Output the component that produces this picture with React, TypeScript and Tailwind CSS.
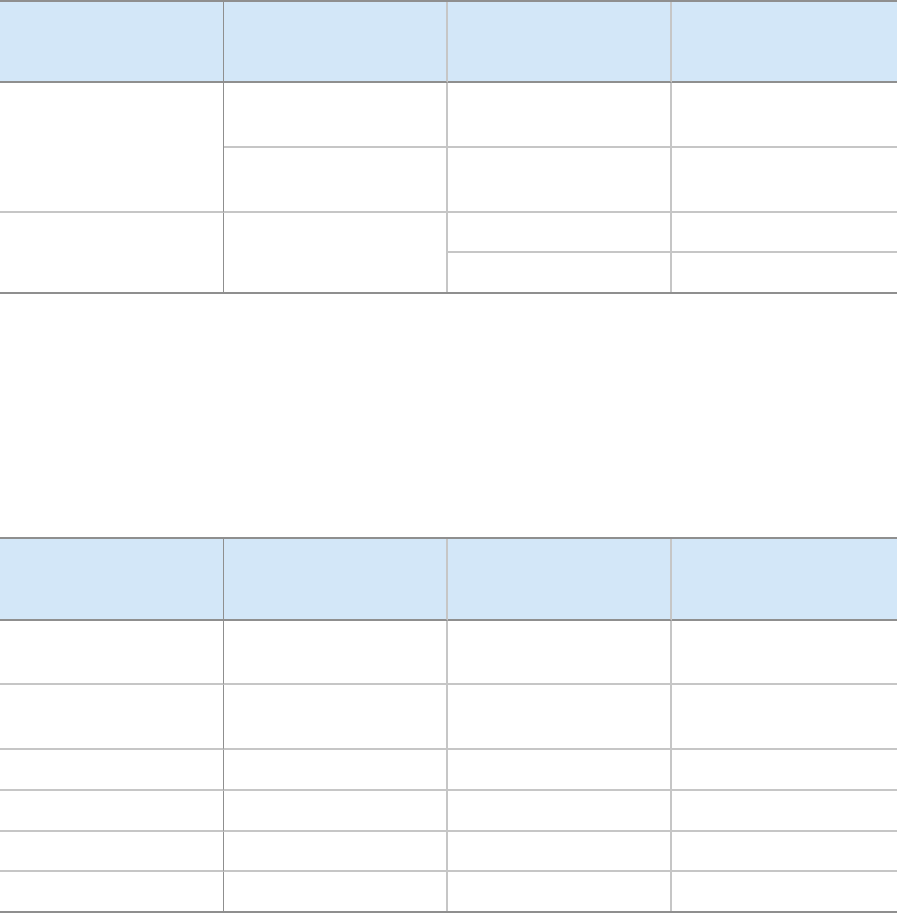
const dark = 'border-[#8f8f8f]';

function Head({ tall }: { tall?: boolean }) {
  const h = tall ? 'h-[82px]' : 'h-[81px]';
  return (
    <>
      <div className={`${h} bg-[#d3e7f8] border-r border-b-2 ${dark}`}></div>
      <div className={`${h} bg-[#d3e7f8] border-r-2 border-r-[#c6c6c6] border-b-2 ${dark}`}></div>
      <div className={`${h} bg-[#d3e7f8] border-r-2 border-r-[#c6c6c6] border-b-2 ${dark}`}></div>
      <div className={`${h} bg-[#d3e7f8] border-b-2 ${dark}`}></div>
    </>
  );
}

function Cell({ h, first, last, bottom = true, span }: { h: number; first?: boolean; last?: boolean; bottom?: boolean; span?: boolean }) {
  return (
    <div
      className={[
        'bg-white',
        first ? `border-r ${dark}` : last ? '' : 'border-r-2 border-r-[#c6c6c6]',
        bottom ? 'border-b-2 border-b-[#c6c6c6]' : '',
        span ? 'row-span-2' : '',
      ].join(' ')}
      style={{ minHeight: h }}
    ></div>
  );
}

export default function App() {
  return (
    <div className="w-[897px] bg-white" style={{ fontFamily: '"Liberation Sans", Arial, sans-serif' }}>
      {/* first table */}
      <div className={`grid grid-cols-[224px_224px_224px_1fr] border-t-2 border-b-2 ${dark}`}>
        <Head />
        <Cell h={130} first span />
        <div className="h-[65px] border-r-2 border-r-[#c6c6c6] border-b-2 border-b-[#c6c6c6]"></div>
        <div className="h-[65px] border-r-2 border-r-[#c6c6c6] border-b-2 border-b-[#c6c6c6]"></div>
        <div className="h-[65px] border-b-2 border-b-[#c6c6c6]"></div>
        <div className="h-[65px] border-r-2 border-r-[#c6c6c6] border-b-2 border-b-[#c6c6c6]"></div>
        <div className="h-[65px] border-r-2 border-r-[#c6c6c6] border-b-2 border-b-[#c6c6c6]"></div>
        <div className="h-[65px] border-b-2 border-b-[#c6c6c6]"></div>

        <Cell h={79} first bottom={false} span />
        <Cell h={79} bottom={false} span />
        <div className="h-[40px] border-r-2 border-r-[#c6c6c6] border-b-2 border-b-[#c6c6c6]"></div>
        <div className="h-[40px] border-b-2 border-b-[#c6c6c6]"></div>
        <div className="h-[39px] border-r-2 border-r-[#c6c6c6]"></div>
        <div className="h-[39px]"></div>
      </div>

      {/* second table */}
      <div className={`mt-[243px] grid grid-cols-[224px_224px_224px_1fr] border-t-2 border-b-2 ${dark}`}>
        <Head tall />
        {[64, 65, 41, 41, 40, 39].map((h, i, arr) => (
          <div key={i} className="contents">
            {[0, 1, 2, 3].map((c) => (
              <div
                key={c}
                className={[
                  c === 0 ? `border-r ${dark}` : c === 3 ? '' : 'border-r-2 border-r-[#c6c6c6]',
                  i < arr.length - 1 ? 'border-b-2 border-b-[#c6c6c6]' : '',
                ].join(' ')}
                style={{ height: h }}
              ></div>
            ))}
          </div>
        ))}
      </div>
    </div>
  );
}
